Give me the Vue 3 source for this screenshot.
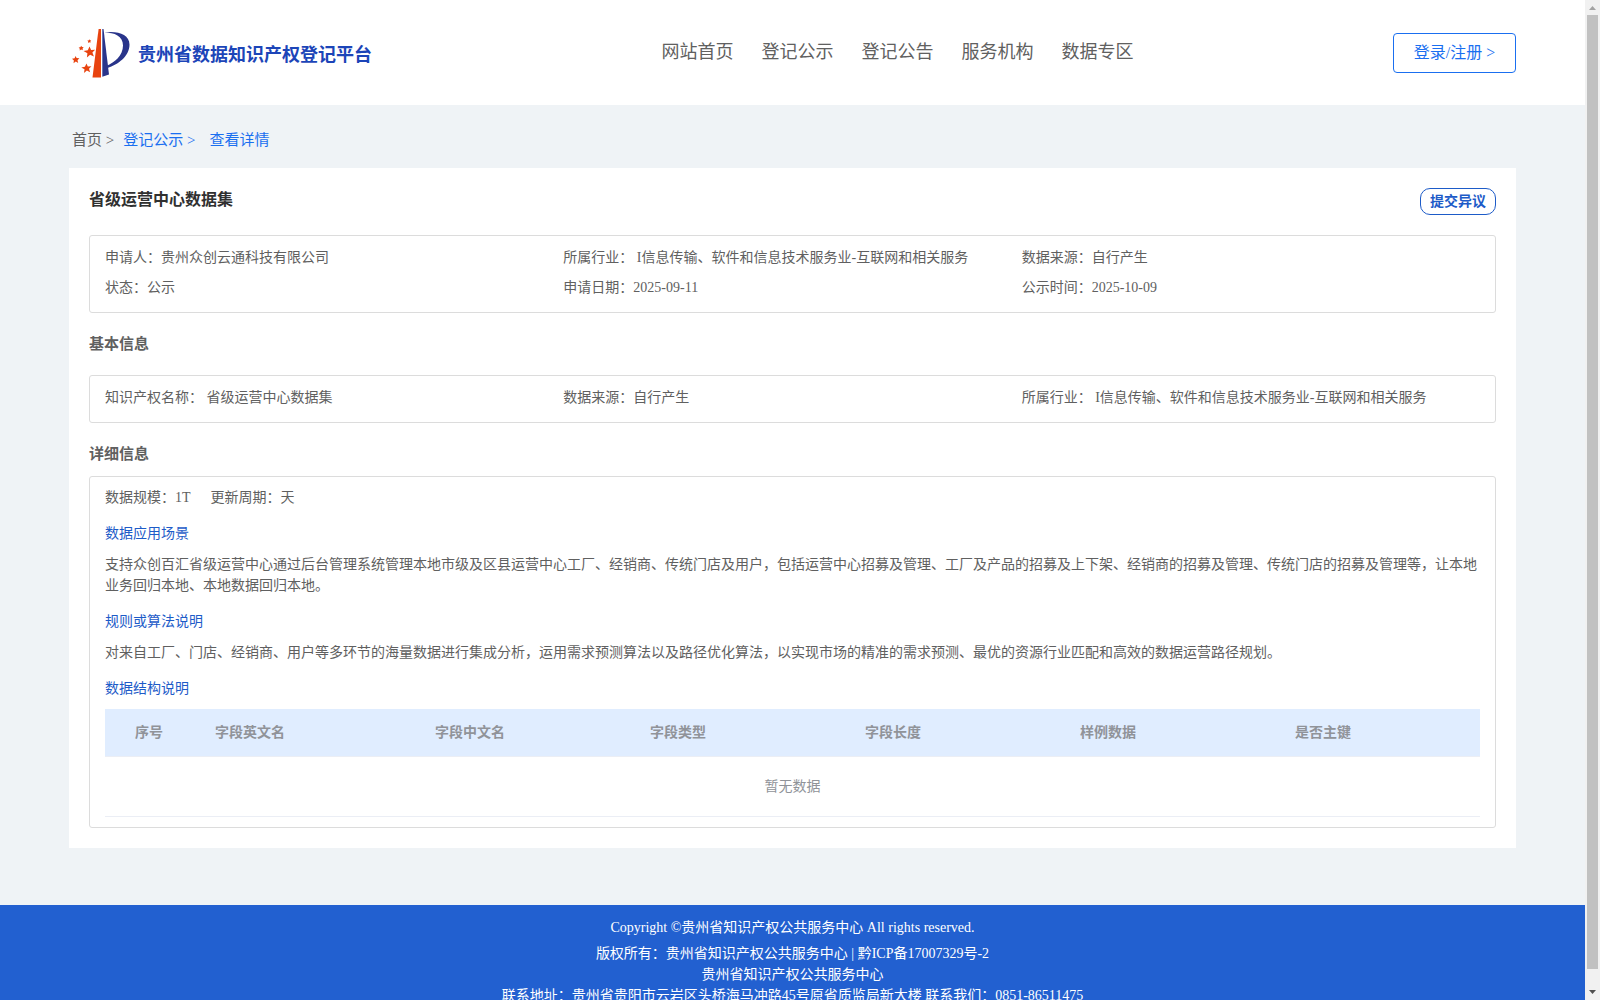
<script setup>
const navItems = ['网站首页', '登记公示', '登记公告', '服务机构', '数据专区']

const summary = [
  { label: '申请人：', value: '贵州众创云通科技有限公司' },
  { label: '所属行业： ', value: 'I信息传输、软件和信息技术服务业-互联网和相关服务' },
  { label: '数据来源：', value: '自行产生' },
  { label: '状态：', value: '公示' },
  { label: '申请日期：', value: '2025-09-11' },
  { label: '公示时间：', value: '2025-10-09' }
]

const basics = [
  { label: '知识产权名称： ', value: '省级运营中心数据集' },
  { label: '数据来源：', value: '自行产生' },
  { label: '所属行业： ', value: 'I信息传输、软件和信息技术服务业-互联网和相关服务' }
]

const columns = ['序号', '字段英文名', '字段中文名', '字段类型', '字段长度', '样例数据', '是否主键']
</script>

<template>
  <div class="shell">
    <div class="page">
      <header class="header">
        <a class="brand" href="#">
          <svg class="logo" viewBox="0 0 58 50" aria-hidden="true">
            <g fill="#e8430f">
              <path d="M26.600 1h2.400v48.500h-8.500z" />
              <path d="M17.500 18.500l1.600 3.400 4-.2-2.700 2.900 1.500 4-3.800-1.900-3.200 2.800.5-4.200-3.900-2.200 4.300-.8z" />
              <path d="M14.500 35.500l1.300 2.900 3.600-.1-2.400 2.500 1.100 3.400-3.200-1.600-2.900 2.300.5-3.600-3.200-1.900 3.600-.7z" />
              <path d="M3.500 28l1.100 2.100 2.800.1-1.900 2 .7 2.800-2.400-1.400-2.300 1.700.4-2.800L0 30.800l2.600-.5z" />
              <path d="M9.200 17.800l.8 1.300 1.700.2-1.100 1.300.2 1.700-1.600-.7-1.500.9.100-1.800-1.200-1.200 1.700-.3z" />
              <path d="M17.300 11.300l.6 1 1.300.2-.8 1 .1 1.300-1.200-.5-1.200.6.100-1.300-.9-1 1.300-.2z" />
            </g>
            <g fill="#29348a">
              <path d="M30.300 1h1.200L37 46.500l-6.700 2.300z" />
              <path d="M32.300 4.500C45 2.500 57.500 6 57.500 16.500c0 12-11.500 20-22 23.500l-.5-2.300C42.500 34.500 51 27.500 51 17.500 51 8 42.500 4.500 32.300 4.500z" />
            </g>
          </svg>
          <span class="brand-name">贵州省数据知识产权登记平台</span>
        </a>
        <nav class="nav">
          <a v-for="item in navItems" :key="item" href="#">{{ item }}</a>
        </nav>
        <button class="login" type="button">登录/注册 &gt;</button>
      </header>

      <main class="content">
        <nav class="crumbs">
          <a class="home" href="#">首页 &gt;</a>
          <a class="parent" href="#">登记公示 &gt;</a>
          <a href="#">查看详情</a>
        </nav>

        <article class="card">
          <div class="card-head">
            <h1>省级运营中心数据集</h1>
            <button class="objection" type="button">提交异议</button>
          </div>

          <div class="box fields">
            <div v-for="f in summary" :key="f.label" class="field">{{ f.label }}{{ f.value }}</div>
          </div>

          <h2>基本信息</h2>
          <div class="box fields">
            <div v-for="f in basics" :key="f.label" class="field">{{ f.label }}{{ f.value }}</div>
          </div>

          <h2 class="tight">详细信息</h2>
          <section class="box details">
            <div class="scale">
              <span>数据规模：1T</span>
              <span>更新周期：天</span>
            </div>
            <h3>数据应用场景</h3>
            <p>支持众创百汇省级运营中心通过后台管理系统管理本地市级及区县运营中心工厂、经销商、传统门店及用户，包括运营中心招募及管理、工厂及产品的招募及上下架、经销商的招募及管理、传统门店的招募及管理等，让本地业务回归本地、本地数据回归本地。</p>
            <h3>规则或算法说明</h3>
            <p>对来自工厂、门店、经销商、用户等多环节的海量数据进行集成分析，运用需求预测算法以及路径优化算法，以实现市场的精准的需求预测、最优的资源行业匹配和高效的数据运营路径规划。</p>
            <h3>数据结构说明</h3>
            <table>
              <colgroup>
                <col class="col-index" />
                <col class="col-name" />
                <col v-for="n in 4" :key="n" class="col-field" />
                <col />
              </colgroup>
              <thead>
                <tr>
                  <th v-for="c in columns" :key="c" scope="col">{{ c }}</th>
                </tr>
              </thead>
              <tbody>
                <tr>
                  <td :colspan="columns.length">暂无数据</td>
                </tr>
              </tbody>
            </table>
          </section>
        </article>
      </main>

      <footer class="footer">
        <p class="copyright">Copyright ©贵州省知识产权公共服务中心 All rights reserved.</p>
        <p>版权所有：贵州省知识产权公共服务中心 | 黔ICP备17007329号-2</p>
        <p>贵州省知识产权公共服务中心</p>
        <p>联系地址：贵州省贵阳市云岩区头桥海马冲路45号原省质监局新大楼 联系我们：0851-86511475</p>
      </footer>
    </div>

    <div class="scrollbar" aria-hidden="true">
      <svg viewBox="0 0 15 15"><path d="M4 10l3.500-4 3.500 4z" fill="#a3a3a3" /></svg>
      <div class="thumb"></div>
      <svg viewBox="0 0 15 15"><path d="M4 5l3.500 4L11 5z" fill="#505050" /></svg>
    </div>
  </div>
</template>

<style>
body {
  margin: 0;
  overflow: hidden;
}
</style>

<style scoped>
.shell {
  display: flex;
  height: 100vh;
  overflow: hidden;
  background: #eff3f6;
  color: #606060;
  font-family: "Liberation Serif", "Noto Sans CJK SC", serif;
  font-size: 14px;
  line-height: 21px;
}

.page {
  flex: 1;
  min-width: 0;
}

a {
  color: inherit;
  text-decoration: none;
}

h1,
h2,
h3,
p {
  margin: 0;
}

button {
  font-family: inherit;
  background: #fff;
  padding: 0;
  cursor: pointer;
}

.header {
  display: grid;
  grid-template-columns: 1fr auto 1fr;
  align-items: center;
  height: 105px;
  padding: 0 69px;
  background: #fff;
}

.brand {
  display: flex;
  align-items: center;
  gap: 8px;
  padding-left: 3px;
}

.logo {
  width: 58px;
  height: 50px;
}

.brand-name {
  padding-top: 5px;
  color: #1c45b8;
  font-size: 18px;
  font-weight: bold;
  white-space: nowrap;
}

.nav {
  display: flex;
  gap: 28px;
  padding: 0 0 1px 210px;
  font-size: 18px;
  white-space: nowrap;
}

.login {
  justify-self: end;
  width: 123px;
  height: 40px;
  padding-bottom: 3px;
  border: 1px solid #1a6ff0;
  border-radius: 4px;
  color: #1a6ff0;
  font-size: 16px;
}

.content {
  padding: 25px 69px 57px;
}

.crumbs {
  display: flex;
  padding-left: 3px;
  margin-bottom: 17px;
  color: #1a6ff0;
  font-size: 15px;
}

.crumbs .home {
  margin-right: 9px;
  color: #606060;
}

.crumbs .parent {
  margin-right: 14px;
}

.card {
  padding: 20px;
  background: #fff;
}

.card-head {
  display: flex;
  justify-content: space-between;
  align-items: flex-start;
  margin-bottom: 20px;
}

h1 {
  color: #303030;
  font-size: 16px;
  line-height: 23px;
}

.objection {
  width: 76px;
  height: 27px;
  padding-bottom: 3px;
  border: 1px solid #1d5bc8;
  border-radius: 10px;
  color: #1d5bc8;
  font-size: 14px;
  font-weight: bold;
}

.box {
  border: 1px solid #dcdcdc;
  border-radius: 3px;
  padding: 0 15px;
}

.fields {
  display: grid;
  grid-template-columns: repeat(3, 1fr);
  row-gap: 9px;
  padding-top: 11px;
  padding-bottom: 14px;
}

.field {
  white-space: pre;
}

h2 {
  margin: 20px 0;
  font-size: 15px;
  line-height: 22px;
}

h2.tight {
  margin-bottom: 11px;
}

.details {
  padding-top: 10px;
  padding-bottom: 10px;
}

.scale {
  display: flex;
  gap: 20px;
}

h3 {
  margin: 15px 0 10px;
  color: #1d5bc8;
  font-size: 14px;
  font-weight: normal;
}

table {
  width: 100%;
  table-layout: fixed;
  border-collapse: separate;
  border-spacing: 0;
  color: #909399;
}

.col-index {
  width: 100px;
}

.col-name {
  width: 220px;
}

.col-field {
  width: 215px;
}

th {
  height: 47px;
  padding: 0 10px;
  border-bottom: 1px solid #ebeef5;
  background: #e0edff;
  text-align: left;
}

th:first-child {
  padding: 0 12px 0 30px;
}

td {
  height: 59px;
  padding: 0;
  border-bottom: 1px solid #ebeef5;
  text-align: center;
}

.footer {
  padding: 12px 0;
  background: #2260d0;
  color: #fff;
  text-align: center;
}

.footer .copyright {
  margin-bottom: 5px;
}

.scrollbar {
  display: flex;
  flex-direction: column;
  width: 15px;
  background: #f1f1f1;
}

.scrollbar svg {
  width: 15px;
  height: 15px;
}

.thumb {
  flex: 1;
  margin: 0 2px 16px;
  background: #c1c1c1;
}
</style>
